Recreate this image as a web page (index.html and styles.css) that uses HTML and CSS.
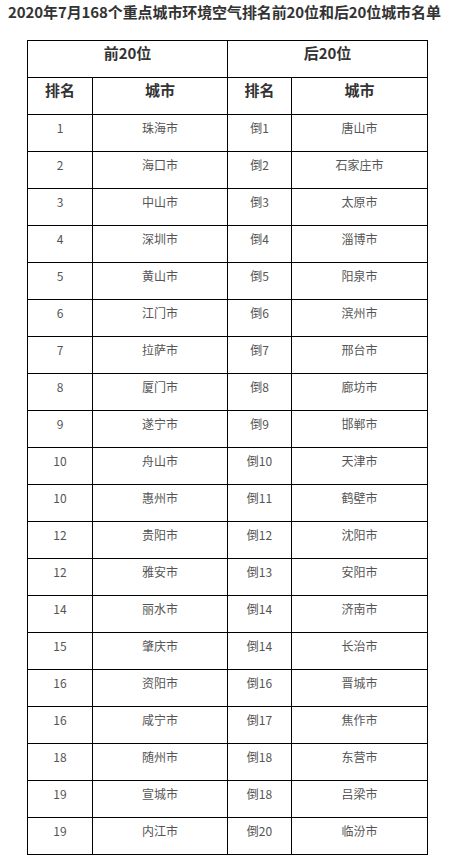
FILE: index.html
```html
<!DOCTYPE html>
<html lang="zh">
<head>
<meta charset="utf-8">
<link rel="stylesheet" href="styles.css">
</head>
<body>
<h1 class="title">2020年7月168个重点城市环境空气排名前20位和后20位城市名单</h1>
<table class="rank">
<colgroup><col class="c1"><col class="c2"><col class="c3"><col class="c4"></colgroup>
<tr class="head"><td colspan="2">前20位</td><td colspan="2">后20位</td></tr>
<tr class="head"><td>排名</td><td>城市</td><td>排名</td><td>城市</td></tr>
<tr><td>1</td><td>珠海市</td><td>倒1</td><td>唐山市</td></tr>
<tr><td>2</td><td>海口市</td><td>倒2</td><td>石家庄市</td></tr>
<tr><td>3</td><td>中山市</td><td>倒3</td><td>太原市</td></tr>
<tr><td>4</td><td>深圳市</td><td>倒4</td><td>淄博市</td></tr>
<tr><td>5</td><td>黄山市</td><td>倒5</td><td>阳泉市</td></tr>
<tr><td>6</td><td>江门市</td><td>倒6</td><td>滨州市</td></tr>
<tr><td>7</td><td>拉萨市</td><td>倒7</td><td>邢台市</td></tr>
<tr><td>8</td><td>厦门市</td><td>倒8</td><td>廊坊市</td></tr>
<tr><td>9</td><td>遂宁市</td><td>倒9</td><td>邯郸市</td></tr>
<tr><td>10</td><td>舟山市</td><td>倒10</td><td>天津市</td></tr>
<tr><td>10</td><td>惠州市</td><td>倒11</td><td>鹤壁市</td></tr>
<tr><td>12</td><td>贵阳市</td><td>倒12</td><td>沈阳市</td></tr>
<tr><td>12</td><td>雅安市</td><td>倒13</td><td>安阳市</td></tr>
<tr><td>14</td><td>丽水市</td><td>倒14</td><td>济南市</td></tr>
<tr><td>15</td><td>肇庆市</td><td>倒14</td><td>长治市</td></tr>
<tr><td>16</td><td>资阳市</td><td>倒16</td><td>晋城市</td></tr>
<tr><td>16</td><td>咸宁市</td><td>倒17</td><td>焦作市</td></tr>
<tr><td>18</td><td>随州市</td><td>倒18</td><td>东营市</td></tr>
<tr><td>19</td><td>宣城市</td><td>倒18</td><td>吕梁市</td></tr>
<tr><td>19</td><td>内江市</td><td>倒20</td><td>临汾市</td></tr>
</table>
</body>
</html>
```
FILE: styles.css
```css
html, body {
  margin: 0;
  padding: 0;
  background: #fff;
}
body {
  font-family: "Noto Sans CJK SC", "Noto Sans", sans-serif;
  color: #555;
}
.title {
  margin: 0;
  padding: 0 0 0 8px;
  font-size: 15px;
  line-height: 24px;
  font-weight: bold;
  color: #333;
  white-space: nowrap;
  letter-spacing: -0.1px;
}
.rank {
  margin: 16px 0 0 27px;
  border-collapse: collapse;
  table-layout: fixed;
  width: 400px;
}
.c1 { width: 65px; }
.c2 { width: 135px; }
.c3 { width: 64px; }
.c4 { width: 136px; }
.rank td {
  border: 1px solid #000;
  height: 37px;
  box-sizing: border-box;
  padding: 3px 0 0;
  vertical-align: top;
  text-align: center;
  font-size: 12px;
  line-height: 20px;
  color: #555;
}
.rank .head td {
  font-size: 15px;
  font-weight: bold;
  line-height: 18px;
  color: #333;
}
```
